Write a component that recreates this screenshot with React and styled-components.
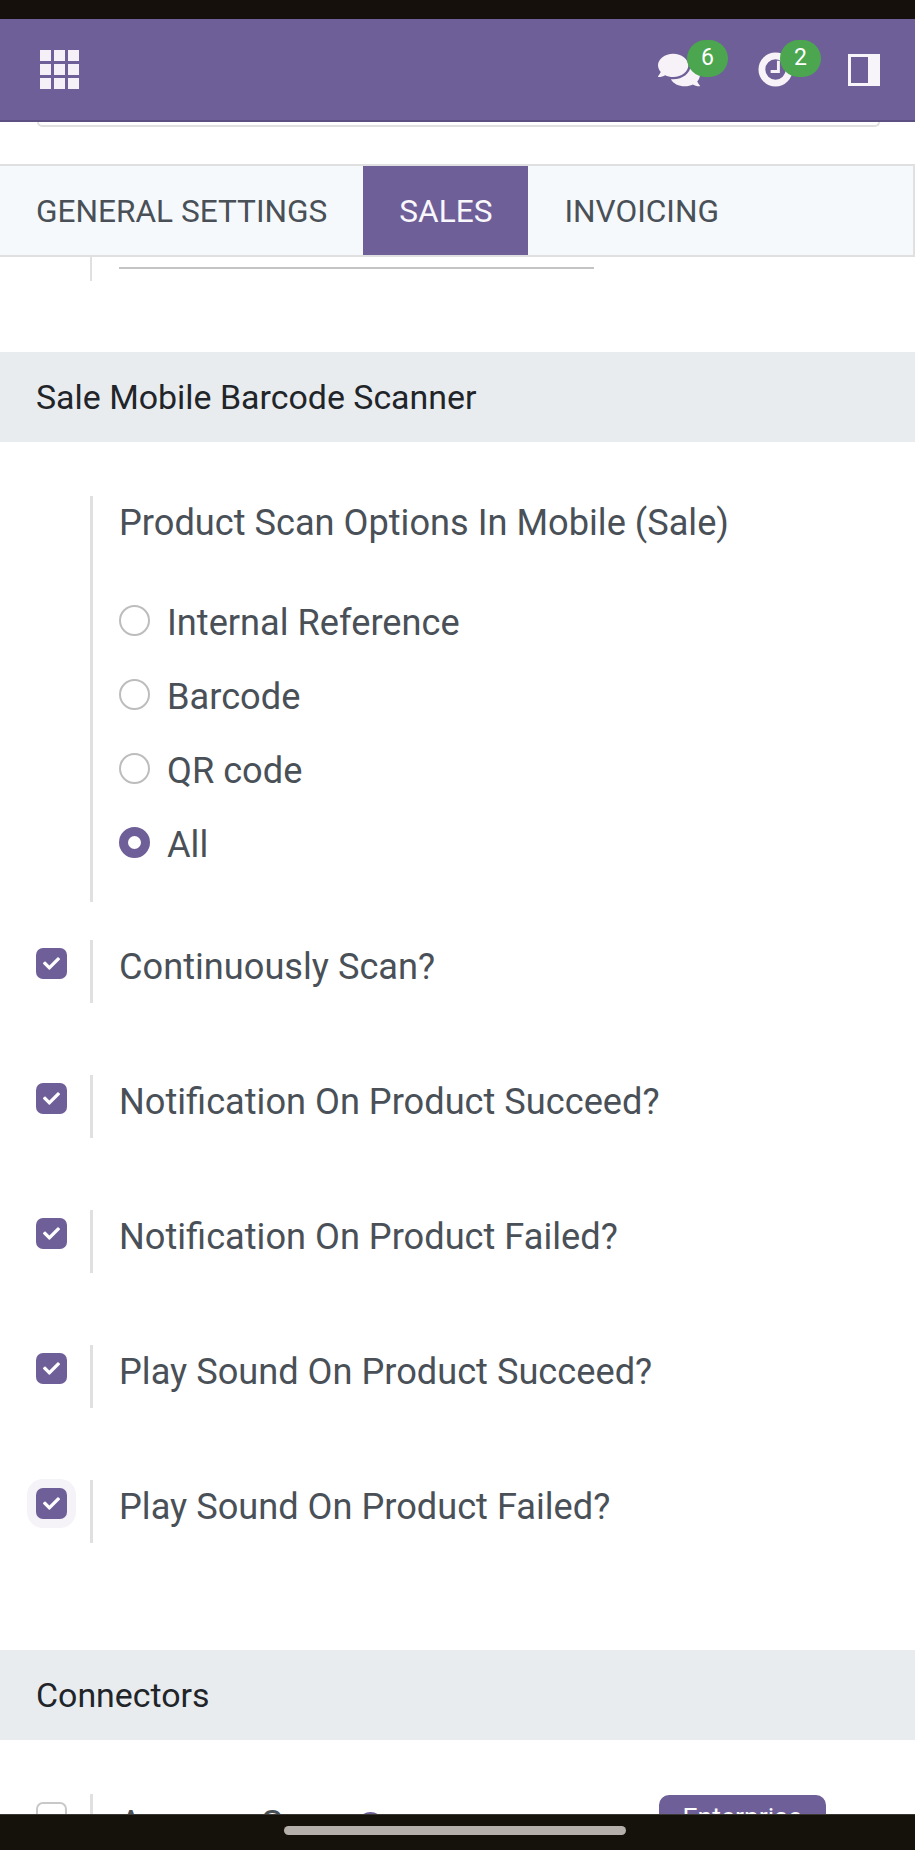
import React from "react";
import styled, { createGlobalStyle } from "styled-components";
import { FaComments, FaCheck } from "react-icons/fa";

const PURPLE = "#6f5f98";
const TEXT = "#495057";
const LINE = "#e0e0e0";

const scanOptions = [
  { label: "Internal Reference" },
  { label: "Barcode" },
  { label: "QR code" },
  { label: "All", checked: true },
];

const toggles = [
  { label: "Continuously Scan?" },
  { label: "Notification On Product Succeed?" },
  { label: "Notification On Product Failed?" },
  { label: "Play Sound On Product Succeed?" },
  { label: "Play Sound On Product Failed?", focused: true },
];

const App = () => {
  return (
    <Page>
      <GlobalStyle />
      <StatusBar />
      <Header>
        <GridIcon>
          {Array.from({ length: 9 }).map((_, index) => (
            <GridDot key={index} />
          ))}
        </GridIcon>
        <HeaderIcons>
          <IconSlot $width={42} $after={3}>
            <FaComments size={42} />
            <Badge>6</Badge>
          </IconSlot>
          <IconSlot $width={35}>
            <svg width="35" height="35" viewBox="0 0 36 36" fill="none" stroke="currentColor">
              <circle cx="18" cy="18" r="14" strokeWidth="7" />
              <path d="M21 9v11h-8" strokeWidth="3" />
            </svg>
            <Badge>2</Badge>
          </IconSlot>
          <PanelIcon />
        </HeaderIcons>
      </Header>
      <Content>
        <SearchRemnant />
        <Tabs>
          <Tab>General Settings</Tab>
          <Tab $active>Sales</Tab>
          <Tab>Invoicing</Tab>
        </Tabs>
        <Scrap>
          <ScrapLine />
        </Scrap>

        <SectionTitle>Sale Mobile Barcode Scanner</SectionTitle>
        <Settings>
          <OptionsPane>
            <OptionsTitle>Product Scan Options In Mobile (Sale)</OptionsTitle>
            <RadioList>
              {scanOptions.map((option) => (
                <RadioRow key={option.label}>
                  <Radio $checked={option.checked} />
                  {option.label}
                </RadioRow>
              ))}
            </RadioList>
          </OptionsPane>
          <Toggles>
            {toggles.map((toggle) => (
              <SettingRow key={toggle.label}>
                <CheckCell>
                  <Checkbox $checked $focused={toggle.focused}>
                    <FaCheck size={17} />
                  </Checkbox>
                </CheckCell>
                <SettingPane>{toggle.label}</SettingPane>
              </SettingRow>
            ))}
          </Toggles>
        </Settings>

        <SectionTitle>Connectors</SectionTitle>
        <ConnectorRow>
          <CheckCell>
            <Checkbox />
          </CheckCell>
          <ConnectorPane>
            Amazon Sync
            <InfoDot />
            <EnterpriseBadge>Enterprise</EnterpriseBadge>
          </ConnectorPane>
        </ConnectorRow>
      </Content>
      <NavBar>
        <HomeHandle />
      </NavBar>
    </Page>
  );
};

export default App;

const GlobalStyle = createGlobalStyle`
  html, body {
    margin: 0;
    padding: 0;
    background: #fff;
  }
  * {
    box-sizing: border-box;
  }
`;
const Page = styled.div`
  display: flex;
  flex-direction: column;
  width: 915px;
  height: 1850px;
  overflow: hidden;
  font-family: Roboto, "Liberation Sans", sans-serif;
  font-size: 36.2px;
  color: ${TEXT};
  background: #fff;
`;
const StatusBar = styled.div`
  flex: none;
  height: 19px;
  background: #15100b;
`;
const Header = styled.header`
  flex: none;
  display: flex;
  justify-content: space-between;
  align-items: center;
  height: 103px;
  padding: 0 35px 0 40px;
  background: ${PURPLE};
  border-bottom: 2px solid #5c4f82;
  color: #f6f2f8;
`;
const GridIcon = styled.div`
  display: grid;
  grid-template-columns: repeat(3, 11px);
  grid-auto-rows: 11px;
  gap: 3px;
`;
const GridDot = styled.span`
  background: #f5f0f8;
`;
const HeaderIcons = styled.div`
  display: flex;
  align-items: center;
  gap: 55px;
`;
const IconSlot = styled.div`
  position: relative;
  display: flex;
  align-items: center;
  width: ${({ $width }) => $width}px;
  height: 42px;
  margin-right: ${({ $after }) => $after || 0}px;
`;
const Badge = styled.span`
  position: absolute;
  top: -9px;
  right: -28px;
  display: flex;
  justify-content: center;
  align-items: center;
  width: 41px;
  height: 37px;
  padding-bottom: 2px;
  border-radius: 19px;
  background: #4ba64f;
  color: #fff;
  font-size: 23px;
`;
const PanelIcon = styled.span`
  display: block;
  width: 32px;
  height: 32px;
  border: 3px solid #f8f5fa;
  border-right-width: 12px;
`;
const Content = styled.main`
  flex: 1;
  min-height: 0;
  overflow: hidden;
`;
const SearchRemnant = styled.div`
  height: 5px;
  margin: 0 35px 0 37px;
  border: 2px solid ${LINE};
  border-top: 0;
  border-radius: 0 0 6px 6px;
`;
const Tabs = styled.nav`
  display: flex;
  height: 93px;
  margin-top: 37px;
  background: #f6f9fb;
  border: 2px solid ${LINE};
  border-left: 0;
`;
const Tab = styled.div`
  display: flex;
  align-items: center;
  padding: 1px 36px 0;
  font-size: 31.6px;
  text-transform: uppercase;
  color: ${({ $active }) => ($active ? "#f8f7fb" : TEXT)};
  background: ${({ $active }) => ($active ? PURPLE : "transparent")};
`;
const Scrap = styled.div`
  height: 24px;
  margin-left: 90px;
  padding: 10px 0 0 27px;
  border-left: 2px solid ${LINE};
`;
const ScrapLine = styled.div`
  width: 475px;
  height: 2px;
  background: #c4c4c4;
`;
const SectionTitle = styled.h2`
  display: flex;
  align-items: center;
  height: 90px;
  margin: 71px 0 0;
  padding-left: 36px;
  background: #e9ecef;
  color: #212529;
  font-size: 33.9px;
  font-weight: 400;
`;
const Settings = styled.section`
  padding: 54px 0 36px;
`;
const OptionsPane = styled.div`
  height: 406px;
  margin-left: 90px;
  padding: 7px 0 0 26px;
  border-left: 3px solid ${LINE};
`;
const OptionsTitle = styled.div`
  line-height: 40px;
`;
const RadioList = styled.div`
  display: flex;
  flex-direction: column;
  gap: 34.3px;
  margin-top: 59px;
`;
const RadioRow = styled.div`
  display: flex;
  align-items: center;
  gap: 17px;
  height: 40px;
`;
const Radio = styled.span`
  flex: none;
  width: 31px;
  height: 31px;
  border-radius: 50%;
  margin-top: -4px;
  background: #fff;
  border: ${({ $checked }) =>
    $checked ? `9px solid ${PURPLE}` : "2.5px solid #bdbdbd"};
`;
const Toggles = styled.div`
  display: flex;
  flex-direction: column;
  gap: 72px;
  margin-top: 38px;
`;
const SettingRow = styled.div`
  display: flex;
  height: 63px;
`;
const CheckCell = styled.div`
  flex: none;
  width: 90px;
  padding: 8px 0 0 36px;
`;
const Checkbox = styled.span`
  display: flex;
  justify-content: center;
  align-items: center;
  width: 31px;
  height: 31px;
  border-radius: 7px;
  color: #fff;
  background: ${({ $checked }) => ($checked ? PURPLE : "#fff")};
  border: ${({ $checked }) => ($checked ? "0" : "2.5px solid #c8c8c8")};
  box-shadow: ${({ $focused }) => ($focused ? "0 0 0 9px #f5f3f8" : "none")};
`;
const SettingPane = styled.div`
  flex: 1;
  display: flex;
  align-items: center;
  padding: 0 0 10px 26px;
  border-left: 3px solid ${LINE};
`;
const ConnectorRow = styled(SettingRow)`
  margin-top: 54px;
`;
const ConnectorPane = styled(SettingPane)`
  padding-bottom: 4px;
`;
const InfoDot = styled.span`
  width: 27px;
  height: 27px;
  margin: 4px 0 0 18px;
  border-radius: 50%;
  background: ${PURPLE};
`;
const EnterpriseBadge = styled.span`
  align-self: flex-start;
  height: 46px;
  margin: 1px 89px 0 auto;
  padding: 0 24px;
  border-radius: 10px;
  background: ${PURPLE};
  color: #fff;
  font-size: 26.5px;
  line-height: 44px;
`;
const NavBar = styled.div`
  flex: none;
  display: flex;
  justify-content: center;
  height: 36px;
  padding: 11px 5px 0 0;
  background: #15120c;
  border-top: 1px solid #3a3833;
`;
const HomeHandle = styled.div`
  width: 342px;
  height: 9px;
  border-radius: 5px;
  background: #b5b0ab;
`;
